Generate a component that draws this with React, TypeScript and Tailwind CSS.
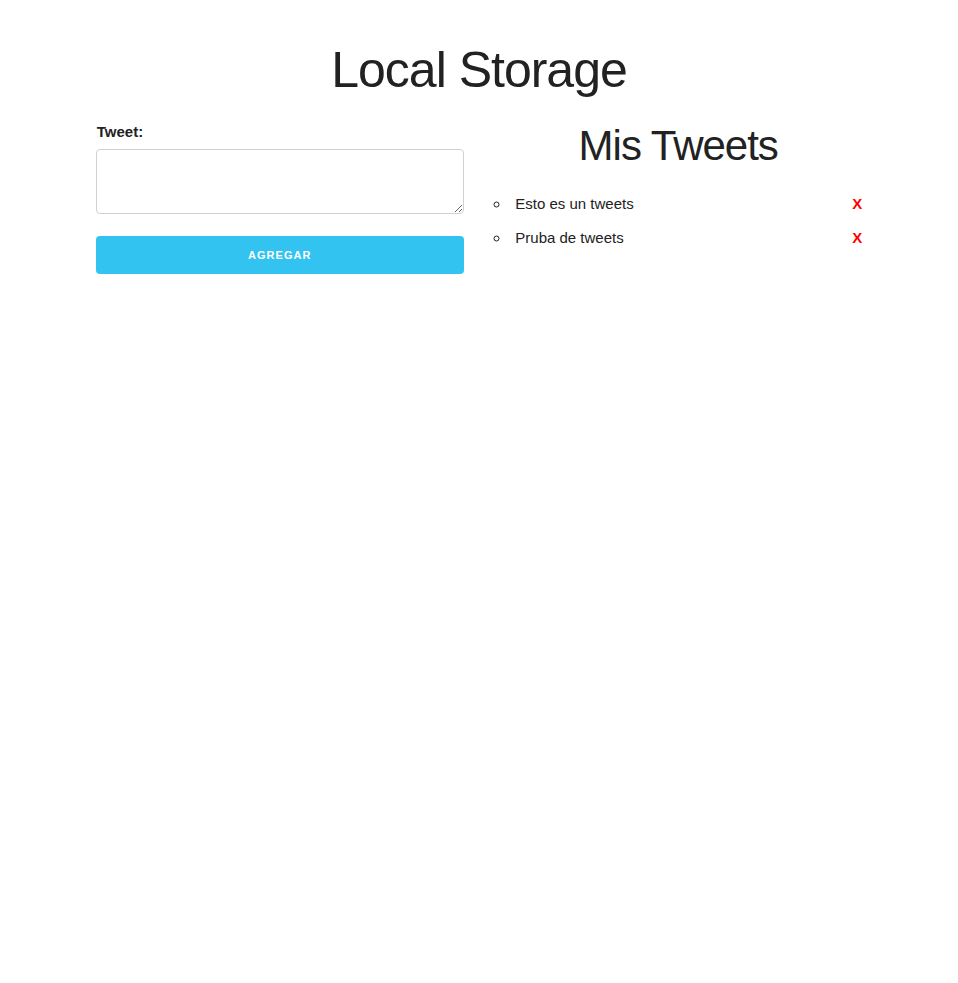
import { useState } from "react";

const font = "font-['Liberation_Sans',Arial,sans-serif]";

export default function App() {
  const [tweets, setTweets] = useState<string[]>(["Esto es un tweets", "Pruba de tweets"]);
  const [draft, setDraft] = useState("");

  const add = () => {
    if (!draft.trim()) return;
    setTweets([...tweets, draft]);
    setDraft("");
  };

  return (
    <div className={`min-h-screen bg-white text-[#222] ${font}`}>
      <div className="mx-auto w-[80%] max-w-[960px]">
        <h1 className="mt-[40px] mb-5 text-center text-[50px] leading-[60px] tracking-[-1px]">
          Local Storage
        </h1>

        <div className="flex gap-[4%]">
          <div className="w-[48%]">
            <label className="mb-[5px] block pl-px text-[15px] font-bold leading-6">Tweet:</label>
            <textarea
              value={draft}
              onChange={(e) => setDraft(e.target.value)}
              className="mb-[22px] block h-[65px] w-full rounded border border-[#D1D1D1] px-[10px] py-[6px] text-[15px] outline-none"
            />
            <button
              onClick={add}
              className="block h-[38px] w-full rounded bg-[#33C3F0] text-[11px] font-bold uppercase leading-[38px] tracking-[1px] text-white"
            >
              Agregar
            </button>
          </div>

          <div className="w-[48%]">
            <h2 className="mb-5 text-center text-[42px] leading-[52px] tracking-[-1px]">Mis Tweets</h2>
            <ul className="mt-[5px] list-inside list-[circle] text-[15px] leading-6">
              {tweets.map((t, i) => (
                <li key={i} className="mb-[10px]">
                  <span>{t}</span>
                  <a
                    href="#"
                    onClick={(e) => {
                      e.preventDefault();
                      setTweets(tweets.filter((_, j) => j !== i));
                    }}
                    className="float-right font-bold text-[#f00]"
                  >
                    X
                  </a>
                </li>
              ))}
            </ul>
          </div>
        </div>
      </div>
    </div>
  );
}
